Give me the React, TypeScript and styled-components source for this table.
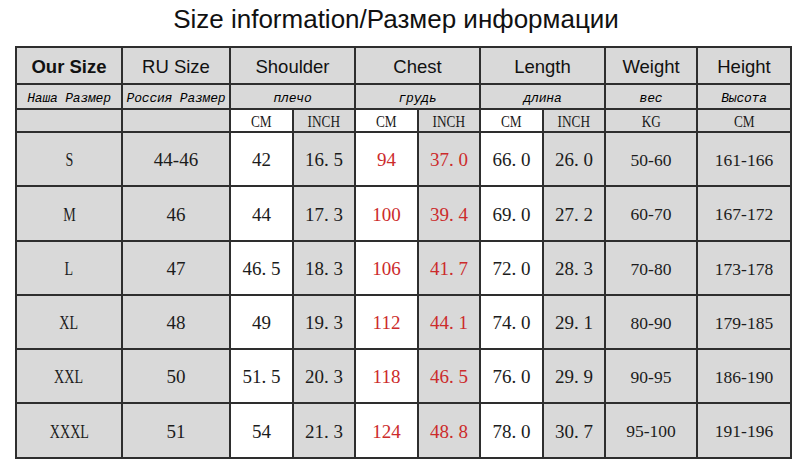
import React from "react";
import styled, { createGlobalStyle, css } from "styled-components";

const Global = createGlobalStyle`
  html, body { margin: 0; padding: 0; background: #ffffff; }
  body { width: 800px; height: 476px; overflow: hidden; }
`;

const GREY = "#d9d9d9";
const LINE = "#2e2e2e";
const RED = "#cc2b2b";

const Page = styled.div`
  width: 800px;
  height: 476px;
  display: flex;
  flex-direction: column;
`;

const Title = styled.h1`
  margin: 0;
  height: 46px;
  box-sizing: border-box;
  padding: 5px 8px 0 0;
  font-family: "Liberation Sans", Arial, sans-serif;
  font-weight: 400;
  font-size: 26px;
  line-height: 28px;
  color: #111111;
  text-align: center;
`;

const SizeGrid = styled.div`
  margin-left: 15px;
  width: fit-content;
  display: grid;
  grid-template-columns: 104px 106px 61px 60px 61px 60px 61px 60px 90px 92px;
  grid-template-rows: 35px 23px 21px 52px 53px 52px 52px 52px 53px;
  gap: 2px;
  border: 2px solid ${LINE};
  background: ${LINE};
`;

const cellBase = css<{ $white?: boolean; $span?: number }>`
  display: flex;
  align-items: center;
  justify-content: center;
  background: ${(p) => (p.$white ? "#ffffff" : GREY)};
  grid-column: span ${(p) => p.$span ?? 1};
  white-space: nowrap;
  overflow: hidden;
`;

const HeadCell = styled.div<{ $span?: number; $bold?: boolean }>`
  ${cellBase};
  padding-top: 2px;
  font-family: "Liberation Sans", Arial, sans-serif;
  font-size: 18.5px;
  font-weight: ${(p) => (p.$bold ? 700 : 400)};
  color: #111111;
`;

const SubCell = styled.div<{ $span?: number }>`
  ${cellBase};
  padding-top: 3px;
  font-family: "Liberation Mono", "Courier New", monospace;
  font-style: italic;
  font-size: 13px;
  letter-spacing: -0.2px;
  color: #000000;
`;

const UnitCell = styled.div<{ $white?: boolean }>`
  ${cellBase};
  padding-top: 2px;
  font-family: "Liberation Serif", "Times New Roman", serif;
  font-size: 17px;
  color: #1a1a1a;
`;

const DataCell = styled.div<{ $white?: boolean; $red?: boolean; $small?: boolean }>`
  ${cellBase};
  padding-top: 2px;
  font-family: "Liberation Serif", "Times New Roman", serif;
  font-size: ${(p) => (p.$small ? "17.5px" : "19px")};
  color: ${(p) => (p.$red ? RED : "#1c1c1c")};
`;

const Narrow = styled.span<{ $scale?: number }>`
  display: inline-block;
  transform: scaleX(${(p) => p.$scale ?? 0.74});
`;

const Dot = styled.span`
  padding-right: 0.25em;
`;

const Num = ({ v }: { v: string }) => {
  const i = v.indexOf(".");
  if (i < 0) return <>{v}</>;
  return (
    <>
      {v.slice(0, i)}
      <Dot>.</Dot>
      {v.slice(i + 1)}
    </>
  );
};

const headers: { en: string; ru: string; span: number; bold?: boolean }[] = [
  { en: "Our Size", ru: "Наша Размер", span: 1, bold: true },
  { en: "RU Size", ru: "Россия Размер", span: 1 },
  { en: "Shoulder", ru: "плечо", span: 2 },
  { en: "Chest", ru: "грудь", span: 2 },
  { en: "Length", ru: "длина", span: 2 },
  { en: "Weight", ru: "вес", span: 1 },
  { en: "Height", ru: "Высота", span: 1 },
];

const units: { t: string; white?: boolean }[] = [
  { t: "" },
  { t: "" },
  { t: "CM", white: true },
  { t: "INCH" },
  { t: "CM", white: true },
  { t: "INCH" },
  { t: "CM", white: true },
  { t: "INCH" },
  { t: "KG" },
  { t: "CM" },
];

const rows: string[][] = [
  ["S", "44-46", "42", "16.5", "94", "37.0", "66.0", "26.0", "50-60", "161-166"],
  ["M", "46", "44", "17.3", "100", "39.4", "69.0", "27.2", "60-70", "167-172"],
  ["L", "47", "46.5", "18.3", "106", "41.7", "72.0", "28.3", "70-80", "173-178"],
  ["XL", "48", "49", "19.3", "112", "44.1", "74.0", "29.1", "80-90", "179-185"],
  ["XXL", "50", "51.5", "20.3", "118", "46.5", "76.0", "29.9", "90-95", "186-190"],
  ["XXXL", "51", "54", "21.3", "124", "48.8", "78.0", "30.7", "95-100", "191-196"],
];

const whiteCols = new Set([2, 4, 6]);
const redCols = new Set([4, 5]);

export default function App() {
  return (
    <Page>
      <Global />
      <Title>Size information/Размер информации</Title>
      <SizeGrid>
        {headers.map((h) => (
          <HeadCell key={"h" + h.en} $span={h.span} $bold={h.bold}>
            {h.en}
          </HeadCell>
        ))}
        {headers.map((h) => (
          <SubCell key={"s" + h.en} $span={h.span}>
            {h.ru}
          </SubCell>
        ))}
        {units.map((u, i) => (
          <UnitCell key={"u" + i} $white={u.white}>
            {u.t && <Narrow $scale={0.78}>{u.t}</Narrow>}
          </UnitCell>
        ))}
        {rows.map((r, ri) =>
          r.map((v, ci) => (
            <DataCell
              key={ri + "-" + ci}
              $white={whiteCols.has(ci)}
              $red={redCols.has(ci)}
              $small={ci >= 8}
            >
              {ci === 0 ? <Narrow>{v}</Narrow> : <Num v={v} />}
            </DataCell>
          ))
        )}
      </SizeGrid>
    </Page>
  );
}
